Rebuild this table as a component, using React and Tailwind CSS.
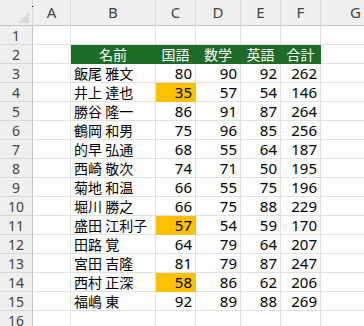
import React from "react";

const data = [
  ["飯尾 雅文", 80, 90, 92, 262, false],
  ["井上 達也", 35, 57, 54, 146, true],
  ["勝谷 隆一", 86, 91, 87, 264, false],
  ["鶴岡 和男", 75, 96, 85, 256, false],
  ["的早 弘通", 68, 55, 64, 187, false],
  ["西崎 敬次", 74, 71, 50, 195, false],
  ["菊地 和温", 66, 55, 75, 196, false],
  ["堀川 勝之", 66, 75, 88, 229, false],
  ["盛田 江利子", 57, 54, 59, 170, true],
  ["田路 覚", 64, 79, 64, 207, false],
  ["宮田 吉隆", 81, 79, 87, 247, false],
  ["西村 正深", 58, 86, 62, 206, true],
  ["福嶋 東", 92, 89, 88, 269, false],
];

const cols = ["A", "B", "C", "D", "E", "F", "G"];
const jp = { fontFamily: '"Noto Sans CJK JP", "Noto Sans", sans-serif' };
const lat = { fontFamily: '"Noto Sans", "Liberation Sans", sans-serif' };

function RowHead({ n }) {
  return (
    <div
      className="h-[19px] flex items-center justify-center bg-[#efefef] border-r border-b border-r-[#c4c4c4] border-b-[#d8d8d8] text-[14px] text-[#444]"
      style={lat}
    >
      {n}
    </div>
  );
}

function Cell({ children, cls = "", bc = "border-[#e1e1e1]" }) {
  return (
    <div className={`h-[19px] border-r border-b ${bc} flex items-center overflow-hidden whitespace-nowrap ${cls}`}>
      {children}
    </div>
  );
}

export default function App() {
  const rows = [];
  rows.push(
    <React.Fragment key="r1">
      <RowHead n={1} />
      {cols.map((c) => (
        <Cell key={c} />
      ))}
    </React.Fragment>
  );
  const heads = ["名前", "国語", "数学", "英語", "合計"];
  rows.push(
    <React.Fragment key="r2">
      <RowHead n={2} />
      <Cell />
      {heads.map((h) => (
        <Cell key={h} bc="border-[#1e6b27]" cls="bg-[#1e6b27] justify-center text-white text-[14px]">
          <span style={jp} className="leading-none">{h}</span>
        </Cell>
      ))}
      <Cell />
    </React.Fragment>
  );
  data.forEach((r, i) => {
    const [name, a, b, c, t, hi] = r;
    rows.push(
      <React.Fragment key={i}>
        <RowHead n={i + 3} />
        <Cell />
        <Cell cls="pl-[3px] text-[14px] text-black">
          <span style={jp} className="leading-none">{name}</span>
        </Cell>
        <Cell
          bc={hi ? "border-[#ffc000]" : "border-[#e1e1e1]"}
          cls={`justify-end pr-[3px] text-[15px] text-black ${hi ? "bg-[#ffc000]" : ""}`}
        >
          <span style={lat} className="leading-none">{a}</span>
        </Cell>
        {[b, c, t].map((v, k) => (
          <Cell key={k} cls="justify-end pr-[3px] text-[15px] text-black">
            <span style={lat} className="leading-none">{v}</span>
          </Cell>
        ))}
        <Cell />
      </React.Fragment>
    );
  });
  rows.push(
    <React.Fragment key="r16">
      <RowHead n={16} />
      {cols.map((c) => (
        <Cell key={c} />
      ))}
    </React.Fragment>
  );

  return (
    <div className="w-[364px] h-[326px] overflow-hidden bg-white relative">
      <div className="grid grid-cols-[33px_38px_85px_40px_45px_40px_40px_70px]">
        <div className="h-[26px] bg-[#efefef] border-r border-b border-r-[#d8d8d8] border-b-[#c4c4c4] relative">
          <svg className="absolute left-[18px] top-[12px]" width="11" height="11" viewBox="0 0 11 11">
            <polygon points="11,0 11,11 0,11" fill="#dadada" />
          </svg>
        </div>
        {cols.map((c) => (
          <div
            key={c}
            className="h-[26px] bg-[#efefef] border-r border-b border-r-[#d8d8d8] border-b-[#c4c4c4] flex items-center justify-center text-[15px] text-[#444]"
            style={lat}
          >
            {c}
          </div>
        ))}
        {rows}
      </div>
      <div className="absolute left-[32px] top-[6px] w-[1px] h-[1px] bg-black" />
    </div>
  );
}
